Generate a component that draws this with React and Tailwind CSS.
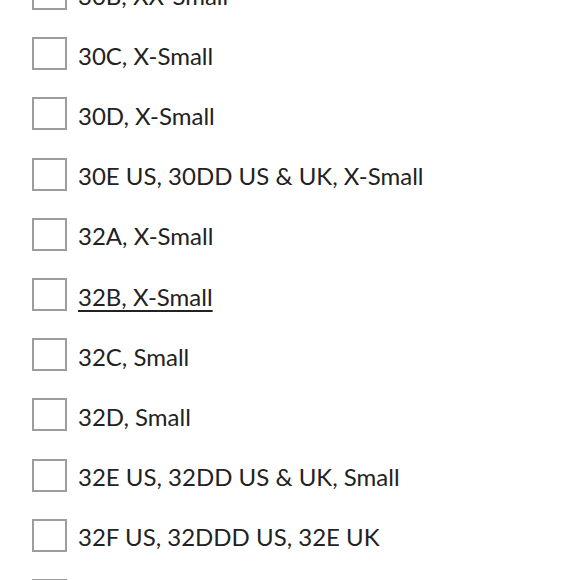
const sizes = [
  '30B, XX-Small',
  '30C, X-Small',
  '30D, X-Small',
  '30E US, 30DD US & UK, X-Small',
  '32A, X-Small',
  '32B, X-Small',
  '32C, Small',
  '32D, Small',
  '32E US, 32DD US & UK, Small',
  '32F US, 32DDD US, 32E UK',
  '32G US, 32DDDD US, 32F UK',
];

export default function App() {
  return (
    <div className="h-[580px] w-[580px] overflow-hidden bg-white">
      <ul className="-mt-[36.5px] font-['Lato',sans-serif] text-[24px] text-[#222]">
        {sizes.map((s) => (
          <li key={s} className="flex h-[60.2px] items-center pl-[32px]">
            <span className="h-[33px] w-[35px] shrink-0 border-2 border-[#9d9d9d] bg-white" />
            <span className={'ml-[11px] pt-[4px] ' + (s === '32B, X-Small' ? 'underline underline-offset-4' : '')}>{s}</span>
          </li>
        ))}
      </ul>
    </div>
  );
}
